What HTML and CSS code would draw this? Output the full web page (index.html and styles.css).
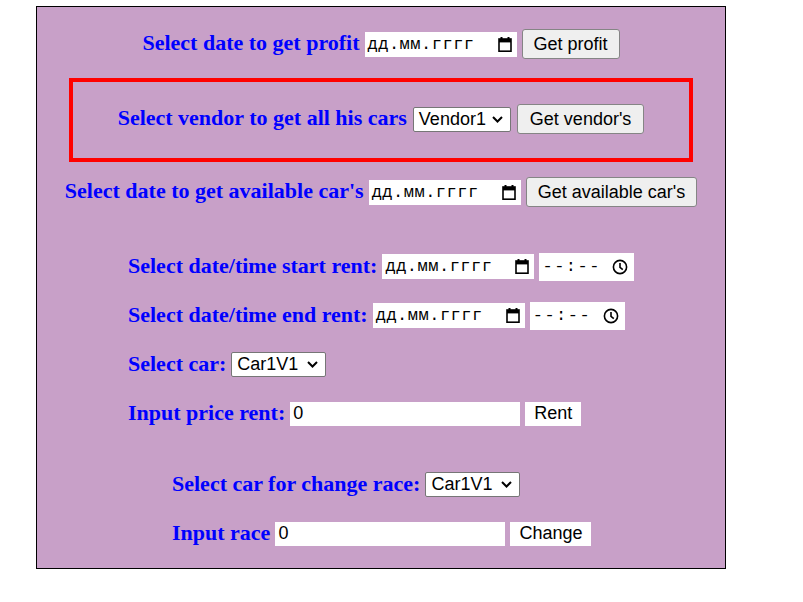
FILE: index.html
```html
<!DOCTYPE html>
<html>
<head>
<meta charset="utf-8">
<link rel="stylesheet" href="styles.css">
</head>
<body>
<div class="panel">
  <div class="row center">
    <span class="label">Select date to get profit</span>
    <div class="date"><span class="ph">дд.мм.гггг</span><svg class="cal" width="14" height="15" viewBox="0 0 14 15"><rect x="2.5" y="0" width="2" height="3"/><rect x="9.5" y="0" width="2" height="3"/><rect x="1" y="2" width="12" height="12.2" fill="none" stroke="#000" stroke-width="1.6"/><rect x="1" y="2" width="12" height="3.4"/></svg></div>
    <button class="btn">Get profit</button>
  </div>
  <div class="redbox">
    <div class="row center">
      <span class="label">Select vendor to get all his cars</span>
      <div class="select w98"><span>Vendor1</span><svg class="chev" width="11" height="7" viewBox="0 0 11 7"><polyline points="1,1 5.5,5.5 10,1" fill="none" stroke="#000" stroke-width="2"/></svg></div>
      <button class="btn wide">Get vendor's</button>
    </div>
  </div>
  <div class="row center r3">
    <span class="label">Select date to get available car's</span>
    <div class="date"><span class="ph">дд.мм.гггг</span><svg class="cal" width="14" height="15" viewBox="0 0 14 15"><rect x="2.5" y="0" width="2" height="3"/><rect x="9.5" y="0" width="2" height="3"/><rect x="1" y="2" width="12" height="12.2" fill="none" stroke="#000" stroke-width="1.6"/><rect x="1" y="2" width="12" height="3.4"/></svg></div>
    <button class="btn">Get available car's</button>
  </div>

  <div class="group g1">
    <div class="row short">
      <span class="label">Select date/time start rent:</span>
      <div class="date"><span class="ph">дд.мм.гггг</span><svg class="cal" width="14" height="15" viewBox="0 0 14 15"><rect x="2.5" y="0" width="2" height="3"/><rect x="9.5" y="0" width="2" height="3"/><rect x="1" y="2" width="12" height="12.2" fill="none" stroke="#000" stroke-width="1.6"/><rect x="1" y="2" width="12" height="3.4"/></svg></div>
      <div class="time"><span class="ph">--:--</span><svg class="clock" width="16" height="16" viewBox="0 0 16 16"><circle cx="8" cy="8" r="6.6" fill="none" stroke="#000" stroke-width="1.6"/><polyline points="8,4 8,8.4 10.8,10.6" fill="none" stroke="#000" stroke-width="1.6"/></svg></div>
    </div>
    <div class="row short">
      <span class="label">Select date/time end rent:</span>
      <div class="date"><span class="ph">дд.мм.гггг</span><svg class="cal" width="14" height="15" viewBox="0 0 14 15"><rect x="2.5" y="0" width="2" height="3"/><rect x="9.5" y="0" width="2" height="3"/><rect x="1" y="2" width="12" height="12.2" fill="none" stroke="#000" stroke-width="1.6"/><rect x="1" y="2" width="12" height="3.4"/></svg></div>
      <div class="time"><span class="ph">--:--</span><svg class="clock" width="16" height="16" viewBox="0 0 16 16"><circle cx="8" cy="8" r="6.6" fill="none" stroke="#000" stroke-width="1.6"/><polyline points="8,4 8,8.4 10.8,10.6" fill="none" stroke="#000" stroke-width="1.6"/></svg></div>
    </div>
    <div class="row short">
      <span class="label">Select car:</span>
      <div class="select w95"><span>Car1V1</span><svg class="chev" width="11" height="7" viewBox="0 0 11 7"><polyline points="1,1 5.5,5.5 10,1" fill="none" stroke="#000" stroke-width="2"/></svg></div>
    </div>
    <div class="row short">
      <span class="label">Input price rent:</span>
      <input class="text" type="text" value="0">
      <button class="plain">Rent</button>
    </div>
  </div>

  <div class="group g2">
    <div class="row short">
      <span class="label">Select car for change race:</span>
      <div class="select w95"><span>Car1V1</span><svg class="chev" width="11" height="7" viewBox="0 0 11 7"><polyline points="1,1 5.5,5.5 10,1" fill="none" stroke="#000" stroke-width="2"/></svg></div>
    </div>
    <div class="row short">
      <span class="label">Input race</span>
      <input class="text" type="text" value="0">
      <button class="plain">Change</button>
    </div>
  </div>
</div>
</body>
</html>
```
FILE: styles.css
```css
html, body {
  margin: 0;
  padding: 0;
  background: #ffffff;
}

.panel {
  margin: 6px 0 0 36px;
  width: 690px;
  height: 563px;
  box-sizing: border-box;
  border: 1px solid #000000;
  background: #c8a0c8;
  padding-top: 12px;
}

.row {
  display: flex;
  align-items: center;
  gap: 5px;
  height: 50px;
}

.row.short {
  height: 49px;
}

.center {
  justify-content: center;
}

.redbox {
  width: 624px;
  box-sizing: border-box;
  border: 4px solid #ff0000;
  margin: 9px auto 0;
  padding: 12px 0 14px;
}

.redbox .row {
  gap: 6px;
}

.r3 {
  margin-top: 5px;
}

.g1 {
  margin-top: 25px;
  padding-left: 91px;
}

.g2 {
  margin-top: 22px;
  padding-left: 135px;
}

.label {
  font-family: "Liberation Serif", "Times New Roman", serif;
  font-weight: bold;
  font-size: 22px;
  color: #0000ff;
  white-space: nowrap;
  padding-bottom: 2px;
}

.date,
.time {
  display: flex;
  align-items: center;
  justify-content: space-between;
  box-sizing: border-box;
  background: #ffffff;
  height: 25px;
  padding: 0 5px 0 3px;
}

.date {
  width: 152px;
}

.time {
  width: 95px;
  height: 28px;
  padding: 0 6px 0 3px;
}

.ph {
  font-family: "Liberation Mono", "DejaVu Sans Mono", monospace;
  font-size: 17px;
  letter-spacing: 0.5px;
  color: #000000;
}

.time .ph {
  letter-spacing: 1.5px;
}

.cal,
.clock {
  display: block;
  flex: none;
}

.btn {
  font-family: "Liberation Sans", Arial, sans-serif;
  font-size: 18px;
  color: #000000;
  background: #efefef;
  border: 1px solid #858585;
  border-radius: 3px;
  height: 30px;
  padding: 0 11px;
  white-space: nowrap;
}

.btn.wide {
  padding: 0 12px;
}

.plain {
  font-family: "Liberation Sans", Arial, sans-serif;
  font-size: 18px;
  color: #000000;
  background: #ffffff;
  border: none;
  height: 24px;
  padding: 0 9px;
  white-space: nowrap;
}

.select {
  display: flex;
  align-items: center;
  justify-content: space-between;
  box-sizing: border-box;
  height: 25px;
  background: #ffffff;
  border: 1px solid #767676;
  border-radius: 2px;
  padding: 0 7px 0 5px;
  font-family: "Liberation Sans", Arial, sans-serif;
  font-size: 18px;
  color: #000000;
}

.w98 {
  width: 98px;
}

.w95 {
  width: 95px;
}

.chev {
  display: block;
  flex: none;
}

.text {
  box-sizing: border-box;
  width: 230px;
  height: 24px;
  border: none;
  outline: none;
  background: #ffffff;
  padding: 0 3px;
  margin: 0;
  font-family: "Liberation Sans", Arial, sans-serif;
  font-size: 18px;
  color: #000000;
}
```
